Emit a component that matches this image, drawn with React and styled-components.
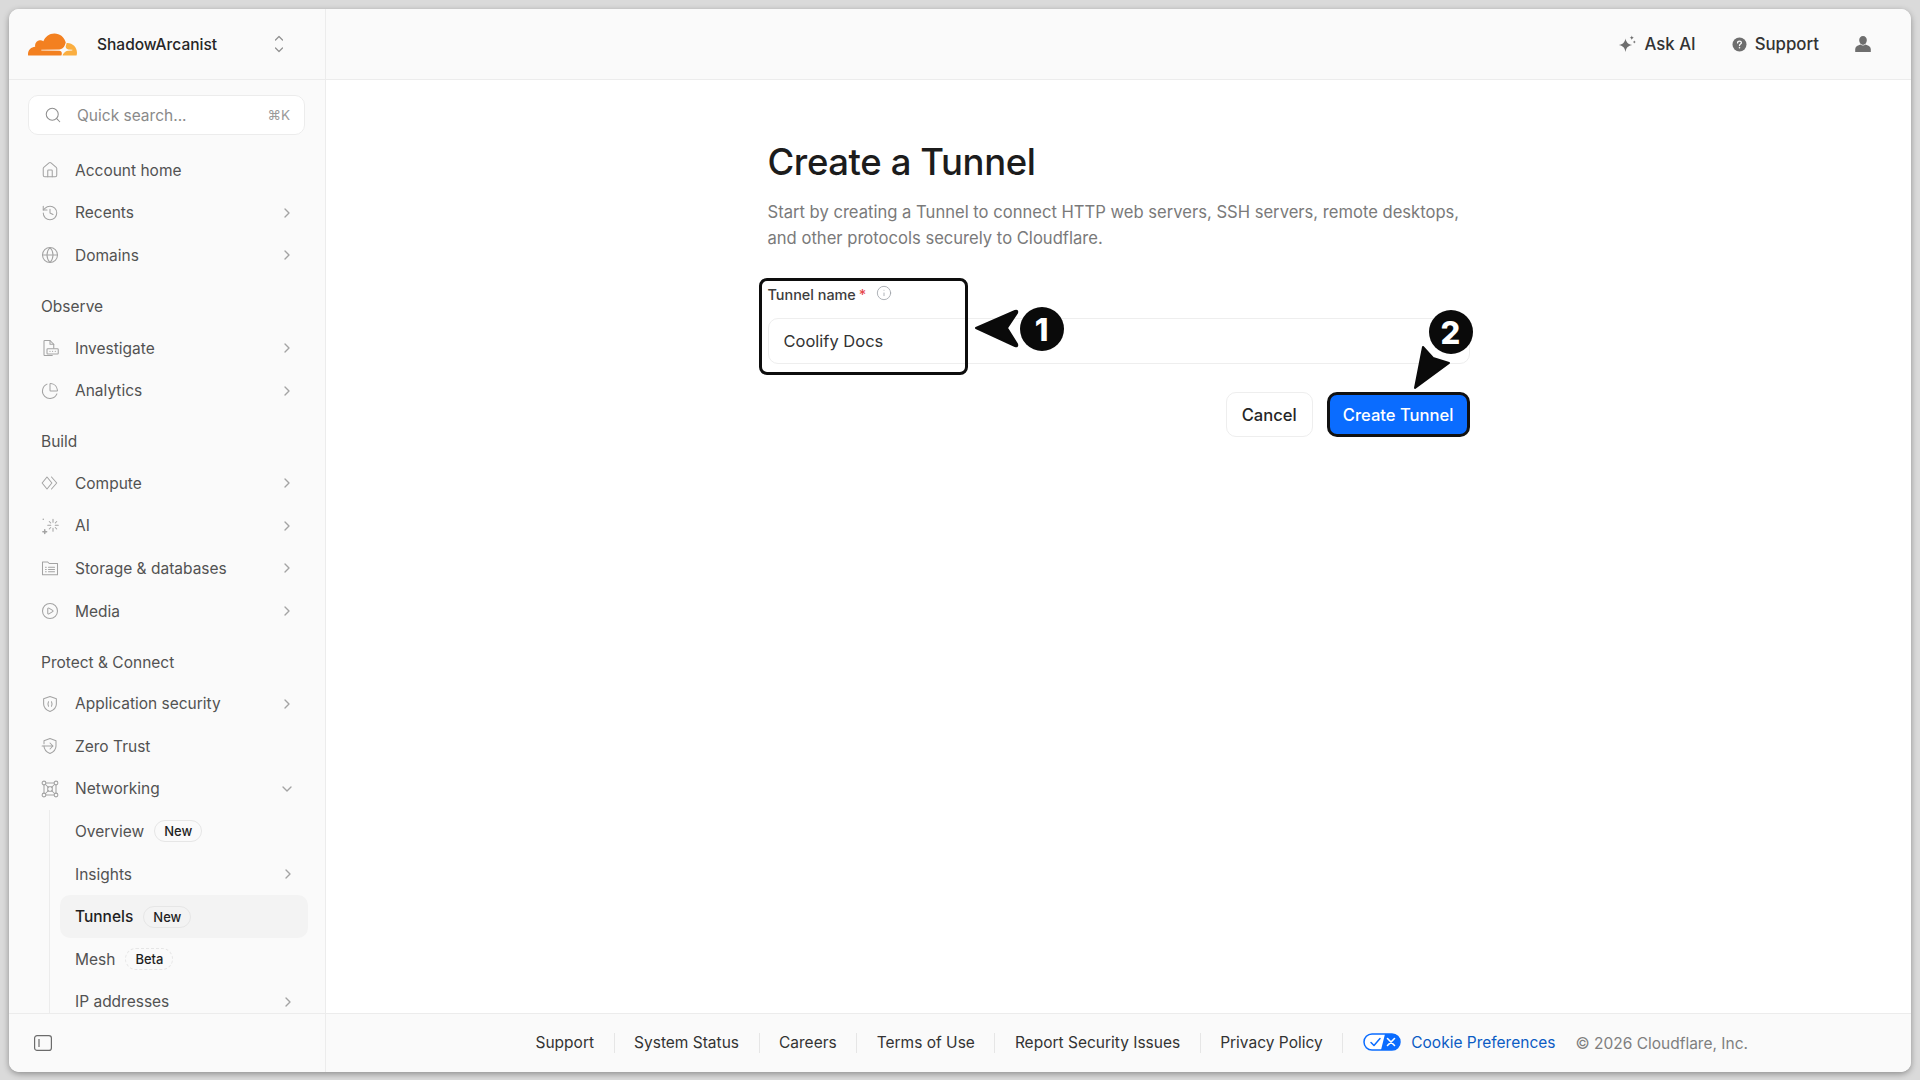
import React from "react";
import styled, { createGlobalStyle } from "styled-components";
import {
  House,
  History,
  Globe,
  ChartPie,
  ChevronRight,
  ChevronDown,
  Search,
  CirclePlay,
  Info,
} from "lucide-react";

const GlobalStyle = createGlobalStyle`
  html, body {
    margin: 0;
    padding: 0;
    height: 100%;
    background: #dadada;
    font-family: Inter, "Noto Sans", sans-serif;
    overflow: hidden;
  }
  * { box-sizing: border-box; }
`;

const Frame = styled.div`
  width: 1920px;
  height: 1080px;
  padding: 9px 9px 8px 9px;
`;

const Window = styled.div`
  width: 100%;
  height: 100%;
  display: flex;
  background: #fff;
  border-radius: 10px;
  overflow: hidden;
  box-shadow: 0 2px 6px rgba(0, 0, 0, 0.35);
`;

const Sidebar = styled.aside`
  width: 317px;
  flex: none;
  display: flex;
  flex-direction: column;
  background: #fafafa;
  border-right: 1px solid #ececec;
`;

const Account = styled.div`
  height: 71px;
  flex: none;
  display: flex;
  align-items: center;
  padding: 0 38px 0 19px;
  border-bottom: 1px solid #ececec;
`;

const AccountName = styled.span`
  margin-left: 20px;
  flex: 1;
  font-size: 15.5px;
  font-weight: 500;
  color: #262626;
`;

const SearchBox = styled.div`
  height: 40px;
  margin: 15px 20px 0 19px;
  flex: none;
  display: flex;
  align-items: center;
  padding: 0 14px 0 15px;
  background: #fff;
  border: 1px solid #ececec;
  border-radius: 10px;
  color: #8a8a8a;
  font-size: 15.5px;
`;

const SearchText = styled.span`
  flex: 1;
  margin-left: 15px;
`;

const Shortcut = styled.span`
  font-size: 13.5px;
  color: #9a9a9a;
`;

const Nav = styled.nav`
  flex: 1;
  min-height: 0;
  overflow: hidden;
  padding-top: 14px;
`;

const Row = styled.div`
  height: 42.6px;
  display: flex;
  align-items: center;
  padding: 0 30px 0 32px;
  font-size: 15.5px;
  color: #525252;
  svg.lead {
    flex: none;
    width: 18px;
    height: 18px;
    margin-right: 16px;
    color: #a3a3a3;
  }
`;

const RowLabel = styled.span`
  flex: 1;
  white-space: nowrap;
`;

const Chevron = styled(ChevronRight)`
  width: 16px;
  height: 16px;
  color: #a3a3a3;
  flex: none;
`;

const Down = styled(ChevronDown)`
  width: 16px;
  height: 16px;
  color: #a3a3a3;
  flex: none;
`;

const Section = styled.div`
  height: 40px;
  margin-top: 10px;
  display: flex;
  align-items: center;
  padding-left: 32px;
  font-size: 15.5px;
  color: #525252;
`;

const SubGroup = styled.div`
  margin-left: 40px;
  border-left: 1px solid #ececec;
`;

const SubRow = styled.div`
  height: 42.6px;
  margin: 0 17px 0 10px;
  display: flex;
  align-items: center;
  padding: 0 12px 0 15px;
  border-radius: 10px;
  font-size: 15.5px;
  color: ${(p) => (p.$active ? "#1f1f1f" : "#525252")};
  background: ${(p) => (p.$active ? "#f3f3f3" : "transparent")};
  font-weight: ${(p) => (p.$active ? 500 : 400)};
`;

const SubLabel = styled.span`
  white-space: nowrap;
`;

const Spacer = styled.span`
  flex: 1;
`;

const Badge = styled.span`
  margin-left: 10px;
  height: 22px;
  padding: 0 9px;
  display: inline-flex;
  align-items: center;
  border-radius: 11px;
  border: 1px ${(p) => (p.$dashed ? "dashed" : "solid")} #e6e6e6;
  font-size: 13px;
  font-weight: 500;
  color: #1f1f1f;
`;

const SideFoot = styled.div`
  height: 59px;
  flex: none;
  display: flex;
  align-items: center;
  padding-left: 25px;
  border-top: 1px solid #ececec;
  color: #6b6b6b;
`;

const Main = styled.main`
  flex: 1;
  min-width: 0;
  display: flex;
  flex-direction: column;
`;

const TopBar = styled.header`
  height: 71px;
  flex: none;
  display: flex;
  align-items: center;
  justify-content: flex-end;
  padding-right: 40px;
  background: #fafafa;
  border-bottom: 1px solid #ececec;
`;

const TopAction = styled.div`
  display: flex;
  align-items: center;
  gap: 8px;
  margin-right: ${(p) => (p.$last ? 0 : "36px")};
  font-size: 16.8px;
  font-weight: 500;
  color: ${(p) => (p.$last ? "#6e6e6e" : "#333")};
  svg { color: #6e6e6e; flex: none; }
`;

const Content = styled.div`
  flex: 1;
  min-height: 0;
  padding-top: 60px;
  display: flex;
  justify-content: center;
`;

const Form = styled.section`
  position: relative;
  width: 702px;
`;

const Title = styled.h1`
  margin: 0;
  font-size: 36.5px;
  line-height: 44px;
  font-weight: 500;
  letter-spacing: -0.4px;
  color: #1c1c1c;
`;

const Description = styled.p`
  margin: 16px 0 0;
  font-size: 16.6px;
  line-height: 25.5px;
  color: #7a7a7a;
`;

const Label = styled.div`
  margin-top: 31px;
  height: 24px;
  display: flex;
  align-items: center;
  font-size: 14.4px;
  font-weight: 500;
  color: #3d3d3d;
  svg {
    margin: -3px 0 0 10px;
    color: #9aa0a6;
  }
`;

const Required = styled.span`
  color: #e5484d;
  margin-left: 3px;
`;

const Input = styled.div`
  margin-top: 12px;
  height: 46px;
  display: flex;
  align-items: center;
  padding: 0 15px;
  background: #fff;
  border: 1px solid #eeeeee;
  border-radius: 10px;
  font-size: 16.5px;
  color: #333;
`;

const Actions = styled.div`
  margin-top: 28px;
  display: flex;
  justify-content: flex-end;
  gap: 14px;
`;

const Button = styled.button`
  height: 45px;
  padding: 0 ${(p) => (p.$primary ? "13px" : "15px")};
  border-radius: 10px;
  border: ${(p) => (p.$primary ? "3px solid #111" : "1px solid #eeeeee")};
  background: ${(p) => (p.$primary ? "#0a6cff" : "#fff")};
  color: ${(p) => (p.$primary ? "#fff" : "#262626")};
  font-family: inherit;
  font-size: 16.6px;
  font-weight: 500;
`;

const Highlight = styled.div`
  position: absolute;
  left: -9px;
  top: 138px;
  width: 209px;
  height: 97px;
  border: 3px solid #0d0d0d;
  border-radius: 8px;
  pointer-events: none;
`;

const Pointer = styled.svg`
  position: absolute;
  left: 0;
  top: 0;
  width: 702px;
  height: 340px;
  overflow: visible;
  pointer-events: none;
`;

const Step = styled.div`
  position: absolute;
  left: ${(p) => p.$x}px;
  top: ${(p) => p.$y}px;
  width: 44px;
  height: 44px;
  border-radius: 50%;
  background: #0a0a0a;
  color: #fff;
  display: flex;
  align-items: center;
  justify-content: center;
  font-size: 31px;
  font-weight: 800;
`;

const Footer = styled.footer`
  height: 59px;
  flex: none;
  display: flex;
  align-items: center;
  padding-left: 190px;
  background: #fafafa;
  border-top: 1px solid #ececec;
  font-size: 15.5px;
  color: #333;
`;

const FootLink = styled.span`
  padding: 0 19.5px;
  white-space: nowrap;
  border-right: 1px solid #e6e6e6;
  line-height: 20px;
  &:last-of-type { border-right: none; padding-right: 0; }
`;

const CookieLink = styled.span`
  display: flex;
  align-items: center;
  gap: 10px;
  margin-left: 20px;
  margin-top: -2px;
  color: #0b5cc4;
  white-space: nowrap;
`;

const Copyright = styled.span`
  margin-left: 20px;
  color: #7f7f7f;
  white-space: nowrap;
`;

const Thin = ({ children }) => (
  <svg className="lead" viewBox="0 0 24 24" fill="none" stroke="currentColor" strokeWidth="1.4" strokeLinecap="round" strokeLinejoin="round">
    {children}
  </svg>
);

const CloudflareLogo = () => (
  <svg width="49" height="49" viewBox="0 0 24 24" style={{ flex: "none" }}>
    <path fill="#F38020" d="M16.5088 16.8447c.1475-.5068.0908-.9707-.1553-1.3154-.2246-.3164-.6045-.499-1.0615-.5205l-8.6592-.1123a.1559.1559 0 0 1-.1333-.0713c-.0283-.042-.0351-.0986-.021-.1553.0278-.084.1123-.1484.2036-.1562l8.7359-.1123c1.0351-.0489 2.1601-.8868 2.5537-1.9136l.499-1.3013c.0215-.0561.0293-.1128.0147-.168-.5625-2.5463-2.835-4.4453-5.5499-4.4453-2.5039 0-4.6284 1.6177-5.3876 3.8614-.4927-.3658-1.1187-.5625-1.794-.499-1.2026.119-2.1665 1.083-2.2861 2.2856-.0283.31-.0069.6128.0635.894C1.5683 13.171 0 14.7754 0 16.752c0 .1748.0142.3515.0352.5273.0141.083.0844.1475.1689.1475h15.9814c.0909 0 .1758-.0645.2032-.1553l.12-.4268z" />
    <path fill="#FAAE40" d="M19.2656 11.2813c-.0771 0-.1611 0-.2383.0112-.0566 0-.1054.0415-.127.0976l-.3378 1.1744c-.1475.5068-.0918.9707.1543 1.3164.2256.3164.6055.498 1.0625.5195l1.8437.1133c.0557 0 .1055.0263.1329.0703.0283.043.0351.1074.0214.1562-.0283.084-.1132.1485-.204.1553l-1.921.1123c-1.041.0488-2.1582.8867-2.5527 1.914l-.1406.3585c-.0283.0713.0215.1416.0986.1416h6.5977c.0771 0 .1474-.0489.169-.126.1122-.4082.1757-.837.1757-1.2803 0-2.6025-2.125-4.727-4.7344-4.727z" />
  </svg>
);

const UpDown = () => (
  <svg width="16" height="22" viewBox="0 0 16 22" fill="none" stroke="#8f8f8f" strokeWidth="1.2" strokeLinecap="round" strokeLinejoin="round">
    <path d="M4.5 7 8 3.5 11.5 7M4.5 15 8 18.5 11.5 15" />
  </svg>
);

const InvestigateIcon = () => (
  <Thin>
    <path d="M15 22H5a1 1 0 0 1-1-1V3a1 1 0 0 1 1-1h7l5 5v5" />
    <path d="M12 2v5h5" />
    <rect x="8" y="13" width="15" height="7" rx="1" />
    <path d="M12 16.5h.01M15.5 16.5h.01M19 16.5h.01" />
  </Thin>
);

const ComputeIcon = () => (
  <Thin>
    <path d="M8 4 1.5 12 8 20l6.500-8z" />
    <path d="m14 4 7 8-7 8" />
  </Thin>
);

const SparkIcon = () => (
  <Thin>
    <path d="M16 3v4M16 15v4M9 11h4M19 11h4M11 6l2 2M19 14l2 2M21 6l-2 2M13 14l-2 2" />
    <path d="M3 3h.01M5 17v5M2.500 19.500h5" strokeWidth="2" />
  </Thin>
);

const StorageIcon = () => (
  <Thin>
    <path d="M2 4h7l2 2h11v15H2z" />
    <path d="M6 11h1M6 14h1M6 17h1M10 11h8M10 14h8M10 17h8" />
  </Thin>
);

const ShieldIcon = () => (
  <Thin>
    <path d="M12 2 20.500 5v7c0 5-3.500 8-8.500 10-5-2-8.500-5-8.500-10V5z" />
    <path d="M10 9c-1 2-1 4 0 6M14 9c1 2 1 4 0 6" />
  </Thin>
);

const TrustIcon = () => (
  <Thin>
    <path d="M4 9V5l8-3 8 3v7c0 5-3.500 8-8 10-4.500-2-8-5-8-10" />
    <path d="M1.500 12H16M12 8l4 4-4 4" />
  </Thin>
);

const NetworkIcon = () => (
  <Thin>
    <circle cx="4" cy="4" r="2.500" />
    <circle cx="20" cy="4" r="2.500" />
    <circle cx="4" cy="20" r="2.500" />
    <circle cx="20" cy="20" r="2.500" />
    <path d="M6.500 4h11M6.500 20h11M4 6.500v11M20 6.500v11M6 6l4 4M18 6l-4 4M6 18l4-4M18 18l-4-4" />
    <rect x="9" y="9" width="6" height="6" />
  </Thin>
);

const SparkleFilled = () => (
  <svg width="18" height="18" viewBox="0 0 18 18" fill="currentColor">
    <path d="M7.500 3.500c.8 4 2.500 5.700 7 6.500-4.500.8-6.200 2.500-7 7-.8-4.500-2.500-6.200-7-7 4.500-.8 6.200-2.500 7-6.500z" />
    <path d="M13.800.5c.3 1.400.8 1.900 2.200 2.200-1.400.3-1.900.8-2.200 2.200-.3-1.400-.8-1.900-2.200-2.200 1.400-.3 1.900-.8 2.200-2.200zM16.300 5.500l.5 1 1 .5-1 .5-.5 1-.5-1-1-.5 1-.5z" />
  </svg>
);

const HelpFilled = () => (
  <svg width="15" height="15" viewBox="0 0 15 15">
    <circle cx="7.500" cy="7.500" r="7" fill="currentColor" />
    <path d="M5.600 5.900c0-1.100.8-1.800 1.900-1.800s1.900.7 1.900 1.600c0 1.300-1.900 1.400-1.900 2.800" fill="none" stroke="#fafafa" strokeWidth="1.300" strokeLinecap="round" />
    <circle cx="7.500" cy="10.800" r=".8" fill="#fafafa" />
  </svg>
);

const UserFilled = () => (
  <svg width="16" height="16" viewBox="0 0 16 16" fill="currentColor">
    <path d="M8 0c2.300 0 3.800 1.700 3.800 4S10.400 8.800 8 8.800 4.200 6.300 4.200 4 5.700 0 8 0z" />
    <path d="M5.600 8.500C3 9.300.4 10.500.2 13v3h15.600v-3c-.2-2.500-2.800-3.700-5.400-4.500-.7.700-1.500 1.100-2.400 1.100s-1.700-.4-2.400-1.100z" />
  </svg>
);

const CookieToggle = () => (
  <svg width="38" height="18" viewBox="0 0 38 18" style={{ flex: "none" }}>
    <rect x="1" y="1" width="36" height="16" rx="8" fill="#fff" stroke="#0a6cff" strokeWidth="1.500" />
    <path d="M22 1h7a8 8 0 0 1 0 16H18z" fill="#0a6cff" />
    <path d="m8 9.500 3 3 6-7" fill="none" stroke="#0a6cff" strokeWidth="1.500" strokeLinecap="round" strokeLinejoin="round" />
    <path d="m24.500 5.500 7 7M31.500 5.500l-7 7" stroke="#fff" strokeWidth="1.600" strokeLinecap="round" />
  </svg>
);

const NavItem = ({ icon, label, more = true, open }) => (
  <Row>
    {icon}
    <RowLabel>{label}</RowLabel>
    {open ? <Down /> : more ? <Chevron /> : null}
  </Row>
);

const SubItem = ({ label, badge, dashed, more, active }) => (
  <SubRow $active={active}>
    <SubLabel>{label}</SubLabel>
    {badge && <Badge $dashed={dashed}>{badge}</Badge>}
    <Spacer />
    {more && <Chevron />}
  </SubRow>
);

const lucideProps = { className: "lead", strokeWidth: 1.4 };

export default function App() {
  return (
    <>
      <GlobalStyle />
      <Frame>
        <Window>
          <Sidebar>
            <Account>
              <CloudflareLogo />
              <AccountName>ShadowArcanist</AccountName>
              <UpDown />
            </Account>
            <SearchBox>
              <Search size={18} strokeWidth={1.4} color="#8f8f8f" />
              <SearchText>Quick search...</SearchText>
              <Shortcut>⌘K</Shortcut>
            </SearchBox>
            <Nav>
              <NavItem icon={<House {...lucideProps} />} label="Account home" more={false} />
              <NavItem icon={<History {...lucideProps} />} label="Recents" />
              <NavItem icon={<Globe {...lucideProps} />} label="Domains" />
              <Section>Observe</Section>
              <NavItem icon={<InvestigateIcon />} label="Investigate" />
              <NavItem icon={<ChartPie {...lucideProps} />} label="Analytics" />
              <Section>Build</Section>
              <NavItem icon={<ComputeIcon />} label="Compute" />
              <NavItem icon={<SparkIcon />} label="AI" />
              <NavItem icon={<StorageIcon />} label="Storage & databases" />
              <NavItem icon={<CirclePlay {...lucideProps} />} label="Media" />
              <Section>Protect & Connect</Section>
              <NavItem icon={<ShieldIcon />} label="Application security" />
              <NavItem icon={<TrustIcon />} label="Zero Trust" more={false} />
              <NavItem icon={<NetworkIcon />} label="Networking" open />
              <SubGroup>
                <SubItem label="Overview" badge="New" />
                <SubItem label="Insights" more />
                <SubItem label="Tunnels" badge="New" active />
                <SubItem label="Mesh" badge="Beta" dashed />
                <SubItem label="IP addresses" more />
              </SubGroup>
            </Nav>
            <SideFoot>
              <svg width="18" height="16" viewBox="0 0 18 16" fill="none" stroke="currentColor" strokeWidth="1.200">
                <rect x=".6" y=".6" width="16.800" height="14.800" rx="2.500" />
                <path d="M5 4v8" />
              </svg>
            </SideFoot>
          </Sidebar>
          <Main>
            <TopBar>
              <TopAction>
                <SparkleFilled />
                Ask AI
              </TopAction>
              <TopAction>
                <HelpFilled />
                Support
              </TopAction>
              <TopAction $last>
                <UserFilled />
              </TopAction>
            </TopBar>
            <Content>
              <Form>
                <Title>Create a Tunnel</Title>
                <Description>
                  Start by creating a Tunnel to connect HTTP web servers, SSH servers, remote desktops,
                  <br />
                  and other protocols securely to Cloudflare.
                </Description>
                <Label>
                  Tunnel name<Required>*</Required>
                  <Info size={16} strokeWidth={1.200} />
                </Label>
                <Input>Coolify Docs</Input>
                <Actions>
                  <Button>Cancel</Button>
                  <Button $primary>Create Tunnel</Button>
                </Actions>
                <Highlight />
                <Pointer viewBox="0 0 702 340">
                  <path d="M208 188 L247 171 Q250 170 249 173 L239 188 L249 204 Q250 207 247 206 Z" fill="#0a0a0a" stroke="#0a0a0a" strokeWidth="2" strokeLinejoin="round" />
                  <path d="M647 248 L655 207 L665 218 L681 223 Z" fill="#0a0a0a" stroke="#0a0a0a" strokeWidth="2" strokeLinejoin="round" />
                </Pointer>
                <Step $x={252} $y={167}>1</Step>
                <Step $x={661} $y={170}>2</Step>
              </Form>
            </Content>
            <Footer>
              <FootLink>Support</FootLink>
              <FootLink>System Status</FootLink>
              <FootLink>Careers</FootLink>
              <FootLink>Terms of Use</FootLink>
              <FootLink>Report Security Issues</FootLink>
              <FootLink>Privacy Policy</FootLink>
              <CookieLink>
                <CookieToggle />
                Cookie Preferences
              </CookieLink>
              <Copyright>© 2026 Cloudflare, Inc.</Copyright>
            </Footer>
          </Main>
        </Window>
      </Frame>
    </>
  );
}
